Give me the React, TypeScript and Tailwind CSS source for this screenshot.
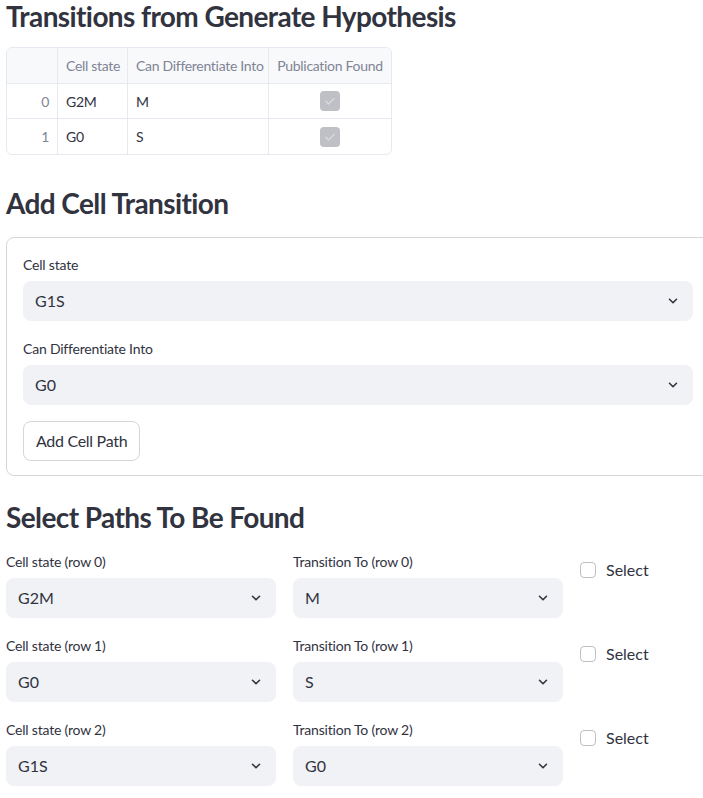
import React from "react";

const font = { fontFamily: '"Source Sans Pro", Lato, "Noto Sans", sans-serif' };

function Chevron() {
  return (
    <svg width="12" height="12" viewBox="0 0 24 24" fill="none" className="text-[#31333f]">
      <path d="M5 8.5l7 7 7-7" stroke="currentColor" strokeWidth="3.2" strokeLinecap="round" strokeLinejoin="round" />
    </svg>
  );
}

function SelectBox({ value }: { value: string }) {
  return (
    <div className="h-10 rounded-lg bg-[#f0f2f6] flex items-center justify-between pl-3 pr-[14px] text-[16px] text-[#31333f]">
      <span>{value}</span>
      <Chevron />
    </div>
  );
}

function Field({ label, value }: { label: string; value: string }) {
  return (
    <div className="flex flex-col">
      <label className="text-[14px] h-5 mb-[7px] flex items-center tracking-[-0.2px] text-[#31333f]">{label}</label>
      <SelectBox value={value} />
    </div>
  );
}

function TableCheck() {
  return (
    <div className="w-5 h-5 rounded-[4px] bg-[#bfc0c5] flex items-center justify-center">
      <svg width="14" height="14" viewBox="0 0 24 24" fill="none">
        <path d="M5 12.5l4.5 4.5L19 7.5" stroke="#d9dade" strokeWidth="2.4" strokeLinecap="round" strokeLinejoin="round" />
      </svg>
    </div>
  );
}

const rows = [
  { i: 0, state: "G2M", into: "M" },
  { i: 1, state: "G0", into: "S" },
];

const paths = [
  { state: "G2M", to: "M" },
  { state: "G0", to: "S" },
  { state: "G1S", to: "G0" },
];

export default function App() {
  return (
    <div className="w-[703px] h-[798px] overflow-hidden bg-white text-[#31333f]" style={font}>
      <div className="ml-[6px] w-[704px]">
        {/* Transitions table */}
        <h3 className="text-[28px] font-bold leading-[34px] -mt-[1px] tracking-[-0.6px]">
          Transitions from Generate Hypothesis
        </h3>
        <div className="mt-[14px] w-[386px] border border-[#e6e9ef] rounded-md overflow-hidden text-[14px] whitespace-nowrap tracking-[-0.3px]">
          <div className="flex h-9 bg-[#f8f9fb] border-b border-[#e6e9ef] text-[#808495]">
            <div className="w-[51px] border-r border-[#e6e9ef]" />
            <div className="w-[70px] border-r border-[#e6e9ef] flex items-center px-2">Cell state</div>
            <div className="w-[141px] border-r border-[#e6e9ef] flex items-center px-2">Can Differentiate Into</div>
            <div className="flex-1 flex items-center justify-center">Publication Found</div>
          </div>
          {rows.map((r, idx) => (
            <div key={r.i} className={`flex h-[35px] ${idx === 0 ? "border-b border-[#e6e9ef]" : ""}`}>
              <div className="w-[51px] border-r border-[#e6e9ef] flex items-center justify-end px-2 text-[#808495]">{r.i}</div>
              <div className="w-[70px] border-r border-[#e6e9ef] flex items-center px-2">{r.state}</div>
              <div className="w-[141px] border-r border-[#e6e9ef] flex items-center px-2">{r.into}</div>
              <div className="flex-1 flex items-center justify-center">
                <TableCheck />
              </div>
            </div>
          ))}
        </div>

        {/* Add form */}
        <h3 className="text-[28px] font-bold leading-[34px] mt-[31px] tracking-[-0.6px]">Add Cell Transition</h3>
        <div className="mt-[17px] border border-[#d6d6d9] rounded-lg px-4 pt-[16px] pb-[14px] flex flex-col">
          <Field label="Cell state" value="G1S" />
          <div className="mt-[17px]">
            <Field label="Can Differentiate Into" value="G0" />
          </div>
          <div className="mt-4">
            <button className="h-10 px-3 rounded-lg border border-[#d6d6d9] bg-white text-[16px] tracking-[-0.3px] text-[#31333f]">
              Add Cell Path
            </button>
          </div>
        </div>

        {/* Select paths */}
        <h3 className="text-[28px] font-bold leading-[34px] mt-[24px] tracking-[-0.6px]">Select Paths To Be Found</h3>
        <div className="mt-[17px] flex flex-col gap-[17px]">
          {paths.map((p, i) => (
            <div key={i} className="flex gap-[17px]">
              <div className="w-[270px]">
                <Field label={`Cell state (row ${i})`} value={p.state} />
              </div>
              <div className="w-[270px]">
                <Field label={`Transition To (row ${i})`} value={p.to} />
              </div>
              <div className="flex items-start pt-[10px]">
                <label className="flex items-center gap-[10px] text-[16px] h-[18px]">
                  <span className="w-4 h-4 rounded-[4px] border border-[#bfc0c5] bg-white" />
                  <span>Select</span>
                </label>
              </div>
            </div>
          ))}
        </div>
      </div>
    </div>
  );
}
